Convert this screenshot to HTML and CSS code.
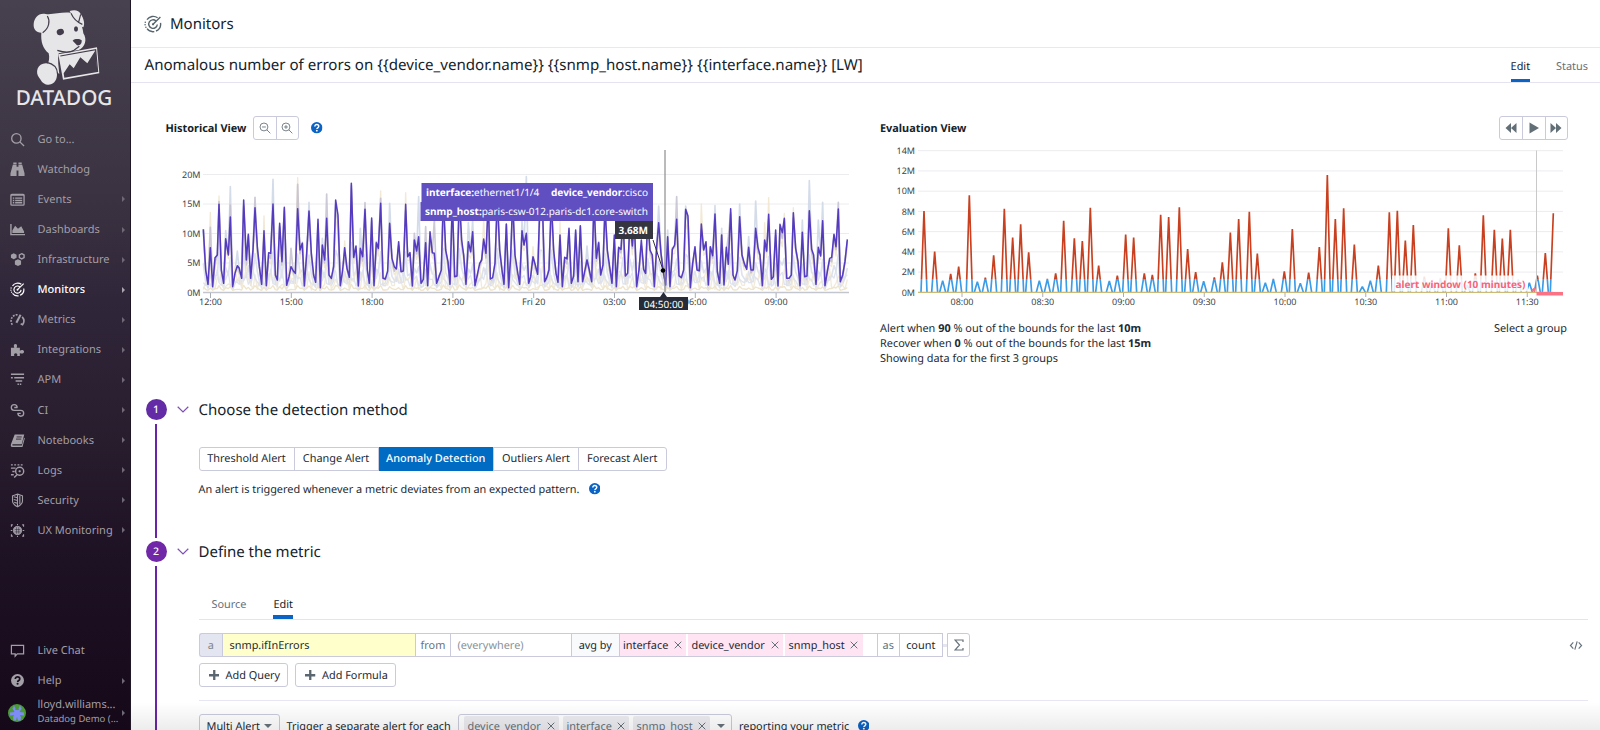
FILE: index.html
```html
<!DOCTYPE html>
<html lang="en">
<head>
<meta charset="utf-8">
<title>Monitors</title>
<link rel="stylesheet" href="styles.css">
</head>
<body>
<svg class="defs" aria-hidden="true">
  <symbol id="i-help" viewBox="0 0 16 16"><circle cx="8" cy="8" r="8" fill="currentColor"/><path d="M5.3 6.2c0-3.6 5.5-3.4 5.5-.2 0 2-2.6 2-2.6 3.7" fill="none" stroke="var(--mark,#fff)" stroke-width="2.1"/><circle cx="8.1" cy="12" r="1.3" fill="var(--mark,#fff)"/></symbol>
  <symbol id="i-monitor" viewBox="0 0 18 18"><g fill="none" stroke="currentColor" stroke-width="1.4"><path d="M3 4.600A7.600 7.600 0 0 1 13.600 2.800"/><path d="M16.500 7.800A7.600 7.600 0 0 1 12 16"/><path d="M10.300 16.600A7.600 7.600 0 0 1 3 13.700"/><path d="M12 6A4.300 4.300 0 1 0 13.300 9.500"/><path d="M8.800 9.400 16.400 2"/></g><circle cx="9" cy="9.300" r="1.100" fill="currentColor"/><circle cx="1.300" cy="7.200" r=".8" fill="currentColor"/><circle cx="1.100" cy="9.800" r=".8" fill="currentColor"/><circle cx="1.900" cy="12.200" r=".8" fill="currentColor"/></symbol>
  <symbol id="i-x" viewBox="0 0 8 8"><path d="M.7.7l6.600 6.600M7.300.7L.7 7.300" stroke="currentColor" stroke-width="1" fill="none"/></symbol>
  <symbol id="i-plus" viewBox="0 0 10 10"><path d="M5 0v10M0 5h10" stroke="currentColor" stroke-width="2.200"/></symbol>
  <symbol id="i-chev" viewBox="0 0 12 7"><path d="M.7.8 6 6l5.300-5.200" stroke="currentColor" stroke-width="1.200" fill="none"/></symbol>
</svg>

<div class="app">
  <aside class="sidebar">
    <svg class="logo" viewBox="0 0 393 330">
      <g fill="#e6e5e7">
        <path d="M137 42C160 45 190 34 213 39C232 50 248 72 250 100C262 118 256 142 236 150L176 160C172 180 176 200 178 222L140 200C148 185 149 172 146 160C128 145 122 125 124 98C108 98 100 88 101 72C103 52 116 38 137 42Z"/>
        <path d="M209 33C222 28 238 30 242 42C252 56 255 72 250 82C238 80 222 58 209 33Z"/>
        <path d="M138 190C158 190 172 205 171 225C170 245 158 255 143 254C128 253 124 242 118 234C104 218 112 190 138 190Z"/>
        <path d="M175 163 291 142 298 220 189 239Z"/>
      </g>
      <g fill="none" stroke="#433c4a" stroke-width="3.500">
        <path d="M142 48C151 62 148 84 128 98"/>
        <path d="M213 40C219 54 229 66 247 73M242 43 236 66"/>
        <path d="M172 151C190 157 208 160 222 151L238 139"/>
        <path d="M140 187C162 191 172 203 173 222L179 224"/>
        <path d="M181 168 287 149 293 216"/>
      </g>
      <g fill="#433c4a">
        <ellipse cx="181" cy="96" rx="11" ry="9" transform="rotate(-15 181 96)"/><ellipse cx="228" cy="87" rx="6" ry="8"/>
        <path d="M218 122C226 115 239 117 245 121C246 133 238 138 231 136Z"/>
        <path d="M193 233 191 220 209 193 221 205 241 172 262 190 287 150 292 216Z"/>
      </g>
      <text x="47" y="315" textLength="290" lengthAdjust="spacingAndGlyphs" class="wordmark">DATADOG</text>
    </svg>
    <nav class="nav">
      <a class="nav-item"><svg viewBox="0 0 16 16"><circle cx="6.800" cy="6.800" r="5" fill="none" stroke="currentColor" stroke-width="1.400"/><path d="M10.500 10.500 15 15" stroke="currentColor" stroke-width="1.400"/></svg><span>Go to...</span></a>
      <a class="nav-item"><svg viewBox="0 0 16 16" fill="currentColor"><path d="M3 3h4v12H.5V12zM3.500.5H7v2H3.500zM13 3H9v12h6.500V12zM9 .5h3.500v2H9zM7 5h2v4H7z"/></svg><span>Watchdog</span></a>
      <a class="nav-item more"><svg viewBox="0 0 16 16"><rect x="1" y="2.500" width="14" height="11.500" rx="1" fill="none" stroke="currentColor" stroke-width="1.400"/><path d="M1 3.200h14M3 6.500h1.500M5.500 6.500H13M3 9h1.500M5.500 9H13M3 11.500h1.500M5.500 11.500H13" stroke="currentColor" stroke-width="1.500"/></svg><span>Events</span></a>
      <a class="nav-item more"><svg viewBox="0 0 16 16"><path d="M1 2v11.500h15" fill="none" stroke="currentColor" stroke-width="1.500"/><path d="M2.500 11.800V9l3-5 3 3.200 3.500-2.700 3 5.500v1.800z" fill="currentColor"/></svg><span>Dashboards</span></a>
      <a class="nav-item more"><svg viewBox="0 0 16 16" fill="currentColor"><path d="M4 1.200 7 2.800v3.400L4 7.800 1 6.200V2.800zM8.500 7.600l3.300 1.800v3.800l-3.300 1.800-3.300-1.800V9.400z"/><path d="m12.500 1.800 2.500 1.400v2.700l-2.500 1.400L10 5.900V3.200z" fill="none" stroke="currentColor" stroke-width="1.500"/></svg><span>Infrastructure</span></a>
      <a class="nav-item more active"><svg><use href="#i-monitor"/></svg><span>Monitors</span></a>
      <a class="nav-item more"><svg viewBox="0 0 16 16" fill="none" stroke="currentColor" stroke-width="1.700"><path d="M2.500 13.500A6.600 6.600 0 0 1 9 3" stroke-dasharray="2 1.200"/><path d="M13 5.200a6.600 6.600 0 0 1 .4 8.300l-2-1"/><path d="M6.800 11.500 11.300 3" stroke-width="2.200"/></svg><span>Metrics</span></a>
      <a class="nav-item more"><svg viewBox="0 0 16 16" fill="currentColor"><path d="M1 6h3.600C3.500 3.800 4.200 2 5.800 2s2.300 1.800 1.200 4h3.500v3.200c1.800-1.300 4.500-.8 4.500 1.200s-2.700 2.500-4.500 1.200V15H7.600c.8-2-.2-3-1.500-3s-2.300 1-1.500 3H1z"/></svg><span>Integrations</span></a>
      <a class="nav-item more"><svg viewBox="0 0 16 16" stroke="currentColor" stroke-width="1.600"><path d="M1 2.500h14M1 6h2M4.500 6H15M6 9.500h7M8 13h1.500M10.500 13H12" /></svg><span>APM</span></a>
      <a class="nav-item more"><svg viewBox="0 0 16 16" fill="none" stroke="currentColor" stroke-width="1.400"><path d="M7.600 4.800A3.100 3.100 0 1 0 4.500 7.900H11.500A3.100 3.100 0 1 1 8.400 11"/><path d="M4.500 4.800h3.500M8 11h3.500"/></svg><span>CI</span></a>
      <a class="nav-item more"><svg viewBox="0 0 16 16" fill="currentColor"><path d="M5 1.500h10.200L12.500 12H3c-.8.200-.8 1.300 0 1.400h9.600L15 5l.8.600-2.500 9.400H2.500C.6 15 .6 13 1.200 11.500z"/><path d="M7 4.200h5.500M6.400 6.500H12" stroke="#261c2b" stroke-width=".9"/></svg><span>Notebooks</span></a>
      <a class="nav-item more"><svg viewBox="0 0 16 16" fill="none" stroke="currentColor" stroke-width="1.500"><path d="M1 2h2M4.500 2h2M8 2h2M11.500 2h2M1 5.500h5M2.500 9H5M1 12.500h3"/><circle cx="10.300" cy="8.800" r="4.300"/><path d="m7.500 12.500-3 3M9.200 8.800h2.200M10.300 7.700v2.200"/></svg><span>Logs</span></a>
      <a class="nav-item more"><svg viewBox="0 0 16 16" fill="none" stroke="currentColor" stroke-width="1.200"><path d="M8 1.200 13.300 3v5.500c0 3-2.900 5-5.300 6.300C5.600 13.500 2.700 11.500 2.700 8.500V3zM8 1v14"/><path d="M8 5 4 4M8 8 4 7M8 11 4.500 10M10.500 3v9" /></svg><span>Security</span></a>
      <a class="nav-item more"><svg viewBox="0 0 16 16" fill="none" stroke="currentColor"><circle cx="8" cy="8" r="4.300" fill="currentColor"/><path d="M5 7h6M5 9.500h6M7 4.500v7M9.300 4.500v7" stroke="#20152a" stroke-width=".5"/><path d="M1.500 4V2H3M13 2h1.500v2M1.500 12v2H3M13 14h1.500v-2M8 1v1.500M8 13.500V15M.8 8h1.700M13.500 8h1.700" stroke-width="1.100"/></svg><span>UX Monitoring</span></a>
    </nav>
    <div class="nav nav-bottom">
      <a class="nav-item"><svg viewBox="0 0 16 16" fill="none" stroke="currentColor" stroke-width="1.300"><path d="M1.500 2.500h13v9H7.800L5.500 14v-2.500h-4z"/></svg><span>Live Chat</span></a>
      <a class="nav-item more"><svg class="help-nav"><use href="#i-help"/></svg><span>Help</span></a>
      <a class="user more"><svg viewBox="0 0 18 18"><circle cx="9" cy="9" r="9" fill="#4c9a36"/><path d="M6 1.500 7.300 4v2h3.400V4L12 1.500l1.500 3-2 3.500 4.500.5v3l-4-.5 1 2.500-.5 3H10l-1-3.500L8 16.500H5.500l-.5-3L6 11l-4 .5v-3L6.500 8l-2-3.500z" fill="#7e8cf5"/></svg><span class="user-name">lloyd.williams...<small>Datadog Demo (...</small></span></a>
    </div>
  </aside>

  <main class="main">
    <header class="topbar"><svg><use href="#i-monitor"/></svg><span>Monitors</span></header>
    <div class="titlebar">
      <h1>Anomalous number of errors on {{device_vendor.name}} {{snmp_host.name}} {{interface.name}} [LW]</h1>
      <div class="page-tabs"><span class="on">Edit</span><span>Status</span></div>
    </div>

    <div class="views">
      <section class="view hist">
        <div class="view-head"><h2>Historical View</h2>
          <div class="btns"><span><svg viewBox="0 0 14 14" fill="none" stroke="currentColor"><circle cx="5.800" cy="5.800" r="4.600"/><path d="m9.200 9.200 4 4M3.600 5.800H8"/></svg></span><span><svg viewBox="0 0 14 14" fill="none" stroke="currentColor"><circle cx="5.800" cy="5.800" r="4.600"/><path d="m9.200 9.200 4 4M3.600 5.800H8M5.800 3.600V8"/></svg></span></div>
          <svg class="help"><use href="#i-help"/></svg>
        </div>
        <svg id="hist" class="chart" width="715" height="175" viewBox="150 140 715 175"></svg>
      </section>
      <section class="view eval">
        <div class="view-head"><h2>Evaluation View</h2>
          <div class="btns right"><span><svg viewBox="0 0 12 12" fill="currentColor"><path d="M6 1v10L.5 6zM11.500 1v10L6 6z"/></svg></span><span><svg viewBox="0 0 12 12" fill="currentColor"><path d="M1.500.5 11 6l-9.500 5.500z"/></svg></span><span><svg viewBox="0 0 12 12" fill="currentColor"><path d="M.5 1v10L6 6zM6 1v10l5.500-5z"/></svg></span></div>
        </div>
        <svg id="eval" class="chart" width="690" height="175" viewBox="880 140 690 175"></svg>
        <div class="eval-foot">
          <p>Alert when <b>90</b> % out of the bounds for the last <b>10m</b><br>Recover when <b>0</b> % out of the bounds for the last <b>15m</b><br>Showing data for the first 3 groups</p>
          <span>Select a group</span>
        </div>
      </section>
    </div>

    <section class="step one">
      <div class="rail"><span class="num">1</span><i></i></div>
      <svg class="chev"><use href="#i-chev"/></svg>
      <div class="step-body">
        <h3>Choose the detection method</h3>
        <div class="methods"><span>Threshold Alert</span><span>Change Alert</span><span class="on">Anomaly Detection</span><span>Outliers Alert</span><span>Forecast Alert</span></div>
        <div class="desc">An alert is triggered whenever a metric deviates from an expected pattern.<svg class="help"><use href="#i-help"/></svg></div>
      </div>
    </section>

    <section class="step two">
      <div class="rail"><span class="num">2</span><i></i></div>
      <svg class="chev"><use href="#i-chev"/></svg>
      <div class="step-body">
        <h3>Define the metric</h3>
        <div class="tabs"><span>Source</span><span class="on">Edit</span></div>
        <div class="query">
          <span class="q-a">a</span><span class="q-metric">snmp.ifInErrors</span><span class="q-from">from</span><span class="q-scope">(everywhere)</span><span class="q-avg">avg by</span>
          <span class="q-tags"><em>interface<svg><use href="#i-x"/></svg></em><em>device_vendor<svg><use href="#i-x"/></svg></em><em>snmp_host<svg><use href="#i-x"/></svg></em></span>
          <span class="q-as">as</span><span class="q-count">count</span><i class="q-link"></i>
          <span class="q-sum"><svg viewBox="0 0 10 12" fill="none" stroke="currentColor" stroke-width="1.200"><path d="M9 3V1H1l4.500 5L1 11h8V9"/></svg></span>
          <svg class="code" viewBox="0 0 14 10" fill="none" stroke="currentColor" stroke-width="1.300"><path d="M4 1.500.8 5 4 8.500M10 1.500 13.200 5 10 8.500M8.300.5 5.700 9.500"/></svg>
        </div>
        <div class="adds"><span><svg><use href="#i-plus"/></svg>Add Query</span><span><svg><use href="#i-plus"/></svg>Add Formula</span></div>
        <div class="alerts">
          <span class="select">Multi Alert<i class="caret"></i></span><span class="trigger">Trigger a separate alert for each</span>
          <span class="multi"><em>device_vendor<svg><use href="#i-x"/></svg></em><em>interface<svg><use href="#i-x"/></svg></em><em>snmp_host<svg><use href="#i-x"/></svg></em><i class="caret"></i></span>
          <span class="report">reporting your metric</span><svg class="help"><use href="#i-help"/></svg>
        </div>
      </div>
    </section>
    <div class="fade"></div>
  </main>
</div>
<script src="charts.js"></script>
</body>
</html>
```

FILE: styles.css
```css
* { box-sizing: border-box; }
body { margin: 0; font-family: "Noto Sans", sans-serif; font-size: 10.9px; color: #1c2b34; background: #fff; overflow: hidden; text-rendering: geometricPrecision; }
h1, h2, h3, p { margin: 0; font-weight: 400; }
svg { display: block; flex: none; }
em, i { font-style: normal; }
.defs { position: absolute; width: 0; height: 0; }
.app { display: flex; width: 1600px; height: 730px; overflow: hidden; }

.sidebar { width: 131px; flex: none; height: 730px; display: flex; flex-direction: column; background: linear-gradient(#47404e 0, #3b3341 190px, #30263a 300px, #281d2d 440px, #1d1124 560px, #150919 730px); border-right: 1px solid #1f1725; color: #a39fa7; }
.logo { width: 131px; height: 110px; }
.wordmark { font: 500 62px "Noto Sans", sans-serif; fill: #e6e5e7; }
.nav { padding-top: 14.2px; }
.nav-item { display: flex; align-items: center; height: 30.1px; padding-left: 10px; font-size: 11px; }
.nav-item svg { width: 15px; height: 15px; margin-right: 12.5px; }
.nav-item span { white-space: nowrap; }
.nav-item.active { color: #fff; font-weight: 500; }
.nav-item .help-nav { width: 13px; height: 13px; margin: 0 13.5px 0 1px; --mark: #180c1d; }
.more::after { content: ""; margin-left: auto; margin-right: 5px; border-left: 3px solid #6f6976; border-top: 3px solid transparent; border-bottom: 3px solid transparent; }
.more.active::after { border-left-color: #aaa5ae; }
.nav-bottom { margin-top: auto; padding: 0; height: 94.500px; }
.user { display: flex; align-items: center; height: 34px; padding-left: 8px; }
.user svg { width: 18px; height: 18px; margin-right: 11.5px; }
.user-name { font-size: 11px; line-height: 14px; white-space: nowrap; margin-top: -1px; }
.user-name small { display: block; font-size: 9.500px; }

.main { flex: 1; position: relative; min-width: 0; }
.topbar { height: 48px; border-bottom: 1px solid #e9e8f0; display: flex; align-items: center; padding-left: 13px; font-size: 15px; color: #14232b; }
.topbar svg { width: 18px; height: 18px; margin-right: 8px; color: #56646c; }
.titlebar { height: 35px; border-bottom: 1px solid #e4e4f0; display: flex; align-items: center; padding: 0 12px 0 13.500px; }
h1 { font-size: 15.1px; color: #14232b; white-space: nowrap; }
.page-tabs { margin-left: auto; display: flex; gap: 26px; height: 33.500px; align-self: flex-start; color: #66727b; line-height: 38px; }
.page-tabs .on { color: #14232b; border-bottom: 3px solid #0b63c5; }

.views { display: flex; height: 310px; padding-top: 33px; }
.view.hist { width: 730px; padding-left: 19px; }
.view.eval { width: 706px; padding-left: 19px; }
.hist .view-head { padding-left: 15.500px; }
.eval .view-head { width: 687px; }
.view-head { display: flex; align-items: center; height: 24px; }
h2 { font-size: 10.9px; font-weight: 700; color: #14232b; white-space: nowrap; }
.hist h2 { width: 87px; }
.btns { display: flex; border: 1px solid #c9cbdc; border-radius: 3px; height: 24px; color: #626f77; }
.btns span { width: 22.300px; display: grid; place-items: center; }
.btns span + span { border-left: 1px solid #c9cbdc; }
.btns svg { width: 12px; height: 12px; }
.btns.right { margin-left: auto; margin-right: -1px; }
.help { width: 11.500px; height: 11.500px; color: #0b63c5; }
.hist .help { margin-left: 12px; }
.tick { font: 9px "Noto Sans", sans-serif; fill: #3b454c; }
.eval-foot { display: flex; justify-content: space-between; width: 687px; line-height: 15px; margin-top: 6px; }
.tip { font: 10px "Noto Sans", sans-serif; fill: #fff; }
.tip-b { font-weight: 700; }
.win { font: 700 10px "Noto Sans", sans-serif; fill: #fb6478; }

.step { display: flex; padding-left: 14.500px; color: #1c2b34; }
.step.one { height: 142px; margin-top: 6px; }
.step.two { height: 200px; }
.rail { width: 21px; display: flex; flex-direction: column; align-items: center; }
.num { width: 21px; height: 21px; border-radius: 50%; background: #632ca6; color: #fff; font-size: 10.500px; font-weight: 500; display: grid; place-items: center; }
.rail i { width: 2px; flex: 1; margin: 4px 0 3px; background: #6a24a8; }
.two .num { background: #7027a8; }
.two .rail i { margin-bottom: 0; }
.chev { width: 12px; height: 7px; color: #7f4fb5; margin: 7px 10px 0 10px; }
.step-body { flex: 1; margin-right: 12px; }
h3 { font-size: 15px; line-height: 22px; height: 21px; color: #14232b; }
.methods { display: grid; grid-template-columns: 94px 84px 115.500px 85px 87.500px; width: 468px; height: 24px; margin-top: 26.500px; border: 1px solid #c9cbdc; border-radius: 3px; }
.methods span { display: grid; place-items: center; white-space: nowrap; }
.methods span + span { border-left: 1px solid #c9cbdc; }
.methods .on { background: #006bc2; color: #fff; font-weight: 500; margin: -1px 0; }
.desc { display: flex; align-items: center; height: 16px; margin-top: 10.500px; }
.desc .help { margin-left: 9.500px; }
.tabs { display: flex; height: 32px; margin-top: 26px; padding-left: 13px; border-bottom: 1px solid #e4e4f0; align-items: stretch; line-height: 33px; color: #66727b; }
.tabs span + span { margin-left: 26.500px; padding: 0 .5px; }
.tabs .on { color: #14232b; border-bottom: 4px solid #0b63c5; }
.query { display: flex; align-items: center; margin-top: 13px; height: 24px; }
.query > span { height: 24px; border: 1px solid #c9cbdc; border-right: 0; display: flex; align-items: center; justify-content: center; white-space: nowrap; }
.query .q-a { width: 23.500px; background: #e3e5f0; border-radius: 3px 0 0 3px; color: #7d8790; }
.query .q-metric { width: 193px; background: #feffcb; justify-content: flex-start; padding-left: 6.500px; }
.query .q-from { width: 35px; color: #66727b; }
.query .q-scope { width: 121px; color: #8a9399; justify-content: flex-start; padding-left: 6.500px; }
.query .q-avg { width: 47.500px; background: #f9fafb; }
.query .q-tags { width: 258px; justify-content: flex-start; gap: 2px; padding: 0; }
.q-tags em { background: #ffe4f3; height: 22px; display: flex; align-items: center; justify-content: space-between; padding: 0 4.500px 0 3.500px; width: 66.500px; }
.q-tags em:nth-child(2) { width: 95px; }
.q-tags em:nth-child(3) { width: 77.500px; }
.q-tags svg, .multi em svg { width: 8px; height: 8px; color: #66727b; }
.query .q-as { width: 22.500px; color: #66727b; }
.query .q-count { width: 43.500px; border-right: 1px solid #c9cbdc; }
.q-link { width: 4.500px; height: 3px; background: #e4e5ee; }
.query .q-sum { width: 23px; border-right: 1px solid #c9cbdc; border-radius: 0 3px 3px 0; color: #66727b; }
.q-sum svg { width: 10px; height: 12px; }
.code { width: 14px; height: 9px; color: #66727b; margin-left: auto; margin-right: 5.500px; }
.adds { display: flex; gap: 7px; margin-top: 6px; height: 37.500px; border-bottom: 1px solid #e6e7f2; }
.adds span { height: 24px; width: 89.500px; border: 1px solid #c9cbdc; border-radius: 3px; display: flex; align-items: center; padding-left: 9px; gap: 6.500px; white-space: nowrap; }
.adds span + span { width: 101px; }
.adds svg { width: 10.500px; height: 10.500px; color: #5a6770; }
.alerts { display: flex; align-items: center; margin-top: 13.500px; height: 24px; white-space: nowrap; }
.select { width: 81.500px; height: 24px; border: 1px solid #c9cbdc; border-radius: 3px; display: flex; align-items: center; padding: 0 7px; justify-content: space-between; }
.caret { border-top: 4.500px solid #66727b; border-left: 4px solid transparent; border-right: 4px solid transparent; }
.trigger { width: 171px; margin-left: 6.500px; }
.multi { width: 274px; height: 24px; border: 1px solid #c9cbdc; border-radius: 3px; display: flex; align-items: center; gap: 4px; padding: 0 5px; color: #66727b; }
.multi em { background: #ececf1; border-radius: 2px; height: 20px; width: 95px; display: flex; align-items: center; justify-content: space-between; padding: 0 4px; }
.multi em:nth-child(2) { width: 66px; }
.multi em:nth-child(3) { width: 77px; }
.multi .caret { margin-left: 3px; }
.report { margin-left: 7.500px; width: 118.500px; }
.fade { position: absolute; left: 0; right: 0; top: 702px; height: 28px; background: linear-gradient(rgba(0,0,0,0), rgba(0,0,0,.075)); }
```

FILE: charts.js
```js
// Plot coordinates are stored at 3x and scaled down inside a group.
const main = `160,268 167,390 174,433 181,323 188,440 195,353 202,345 207,193 214,390 221,430 227,296 235,345 241,231 248,440 255,400 262,377 268,385 275,415 281,180 289,360 295,283 302,415 309,330 315,203 322,320 328,380 335,433 342,272 349,437 356,338 362,340 369,192 376,405 382,420 389,250 396,365 403,202 410,436 417,410 423,380 430,393 436,400 443,206 450,330 457,310 463,438 470,340 477,213 484,340 491,405 497,427 504,238 511,443 517,315 524,360 530,235 537,405 544,415 551,380 557,180 564,225 571,437 578,390 584,323 591,385 598,412 604,130 611,352 618,318 625,438 631,325 638,350 645,208 652,390 658,430 665,234 672,437 679,308 685,325 692,190 699,415 706,417 713,393 719,250 726,355 733,380 739,387 746,305 753,395 760,393 767,193 773,350 780,338 787,438 793,300 800,333 806,290 813,430 820,418 827,308 833,437 840,275 847,338 853,340 860,430 867,410 874,390 880,170 887,330 894,365 900,433 907,180 914,410 921,408 928,170 935,300 941,345 948,433 955,305 962,335 968,275 975,437 982,405 989,370 995,360 1001,297 1008,340 1015,180 1021,417 1028,413 1035,370 1042,170 1049,330 1056,390 1062,433 1069,252 1076,443 1082,350 1088,180 1095,345 1102,390 1109,433 1116,272 1122,315 1129,280 1136,430 1142,410 1149,350 1156,375 1163,403 1170,180 1177,180 1184,425 1190,413 1197,390 1204,180 1211,330 1218,400 1224,427 1230,285 1237,440 1244,352 1251,357 1257,265 1264,430 1271,408 1277,270 1284,425 1291,257 1298,425 1305,390 1311,360 1318,390 1325,425 1332,180 1339,355 1346,308 1352,405 1359,375 1365,200 1372,330 1379,380 1386,430 1393,285 1399,440 1406,322 1413,328 1419,230 1426,408 1433,400 1440,240 1447,318 1453,240 1460,440 1467,390 1474,300 1481,388 1487,400 1493,235 1500,330 1507,345 1513,440 1520,320 1526,248 1533,340 1540,395 1547,435 1553,290 1560,440 1567,328 1574,315 1580,238 1587,408 1594,413 1601,390 1607,208 1614,228 1621,443 1628,370 1635,320 1641,390 1648,392 1654,252 1661,330 1668,305 1675,435 1681,320 1688,347 1695,222 1702,395 1709,430 1715,285 1722,435 1729,322 1735,373 1742,206 1749,405 1755,420 1762,392 1769,230 1776,345 1783,370 1790,388 1796,322 1803,390 1810,390 1817,265 1824,322 1830,345 1837,437 1844,300 1850,333 1856,223 1864,418 1870,410 1877,270 1884,438 1890,253 1897,278 1903,235 1910,415 1917,415 1924,405 1930,218 1937,325 1944,365 1950,437 1957,277 1964,410 1971,408 1978,212 1985,328 1991,345 1998,433 2005,322 2012,348 2018,242 2025,437 2032,395 2039,355 2045,352 2052,283 2058,320 2065,207 2071,425 2078,405 2085,365 2092,298`;
const pts = main.split(' ').map(p => p.split(',').map(Number));
const overrides = {
  y: {181:217, 207:168, 342:228, 443:113, 584:303, 692:153, 767:158, 1001:240, 1149:320, 1230:245, 1654:192, 1844:248, 1856:173, 1903:220, 1930:203},
  g: {181:262, 207:185, 241:195, 315:172, 423:325, 443:133, 530:162, 645:188, 692:175, 793:280, 827:260, 853:240, 1580:170, 2065:187, 1735:290},
  b: {227:272, 241:140, 262:333, 369:118, 477:187, 517:295, 631:265, 719:190, 806:170, 955:248, 968:240, 1116:245, 1129:110, 1311:318, 1526:198, 1553:270, 1607:198, 1695:197, 1769:192, 1796:290, 1817:183, 1957:240, 1978:122, 2005:240, 2018:187, 1715:265}
};
function line(list, color, width, opacity) {
  return `<polyline points="${list.map(p => p.join(',')).join(' ')}" fill="none" stroke="${color}" stroke-width="${width}" stroke-opacity="${opacity}" stroke-linejoin="round"/>`;
}
function series(key, k, jitter) {
  return pts.map(([x, y], i) => [x, overrides[key][x] || Math.min(450, 450 - (450 - y) * k + ((i * 37) % 11 - 5) * jitter)]);
}
function low(k, base, s) {
  return pts.map(([x], i) => [x, Math.round(base - (450 - pts[(i + s) % pts.length][1]) * k)]);
}
function text(x, y, s, anchor, cls) {
  return `<text x="${x}" y="${y}" text-anchor="${anchor}" class="${cls || 'tick'}">${s}</text>`;
}

let h = '';
['20M', '15M', '10M', '5M', '0M'].forEach((s, i) => {
  const y = 174.500 + i * 29.500;
  h += `<path d="M203 ${y}H849" stroke="#ececef"/>` + text(200.500, y + 3, s, 'end');
});
h += '<path d="M203 292.500H849" stroke="#c3c6cf" stroke-width="1.500"/>';
h += '<g transform="translate(150 140) scale(.33333)">'
  + line(series('b', .93, 1.5), '#cdd6e6', 5, .85)
  + line(series('y', .8, 2), '#efe4cb', 4, .8)
  + line(series('g', .95, 2), '#c0bccd', 5, .8)
  + line(low(.45, 452, 0), '#dadfeb', 5, .9)
  + line(low(.27, 452, 4), '#f1e9d6', 4, .9)
  + line(low(.2, 440, 1), '#dde1ec', 4, .9)
  + line(low(.06, 452, 0), '#efe5cc', 4, 1)
  + line(pts, '#4a2fbd', 4.600, .92)
  + '</g>';
['12:00', '15:00', '18:00', '21:00', 'Fri 20', '03:00', '06:00', '09:00'].forEach((s, i) => {
  const x = 210.500 + i * 80.800;
  h += `<path d="M${x} 293v5" stroke="#a9adb5"/>` + text(x, 305, s, 'middle');
});
h += '<path d="M665 150V292" stroke="#8c8c8c" stroke-opacity=".75" stroke-width="1.600"/>'
  + '<path d="M421.500 183H653v38H420.500v-19h1z" fill="#5f4fc0"/>'
  + text(426, 196.200, '<tspan class="tip-b">interface:</tspan>ethernet1/1/4', 'start', 'tip')
  + text(648, 196.200, '<tspan class="tip-b">device_vendor</tspan>:cisco', 'end', 'tip')
  + text(648, 215, '<tspan class="tip-b">snmp_host:</tspan>paris-csw-012.paris-dc1.core-switch', 'end', 'tip')
  + '<path d="M615 221h38v18h-38z" fill="#34353f"/>' + text(648, 234.300, '3.68M', 'end', 'tip tip-b')
  + '<path d="M653 240 663 270" stroke="#333" fill="none"/><circle cx="663" cy="270.500" r="2.300" fill="#000"/>'
  + '<path d="M639 297h21l3.500-5 3.500 5h21v13h-49z" fill="#272b38"/>' + text(663.500, 307.500, '04:50:00', 'middle', 'tip');
document.getElementById('hist').innerHTML = h;

const peaks = `162,303 194,425 218,512 242,492 266,470 298,256 322,515 346,503 371,436 403,296 428,383 452,343 476,427 508,512 532,507 557,490 581,332 613,385 637,393 661,293 686,467 718,513 742,497 767,374 791,383 823,490 847,495 872,314 896,321 928,292 953,417 977,486 1001,514 1033,502 1057,457 1081,368 1106,327 1138,305 1162,431 1186,518 1210,507 1243,484 1267,357 1291,520 1316,488 1348,411 1372,195 1396,327 1421,295 1453,404 1477,530 1501,512 1525,467 1558,307 1582,302 1606,392 1630,345 1663,500 1687,520 1711,505 1735,355 1768,406 1792,525 1816,490 1840,316 1873,359 1897,386 1921,359 1945,508 1978,518 2002,497 2026,429`
  .split(' ').map(p => p.split(',').map(Number));
let d = peaks.map(([x, y]) => `M${x - 9} 547L${x} ${y}L${x + 9} 547`).join('') + 'M2041 547L2050 310';
let e = '<clipPath id="hi"><path d="M0 0H2300V507H0z"/></clipPath><clipPath id="lo"><path d="M0 507H2300V549H0z"/></clipPath>';
for (let i = 0; i <= 7; i++) {
  const y = 150.700 + i * 20.230;
  e += `<path d="M918 ${y}H1563" stroke="#ececef"/>` + text(915, y + 3.200, (14 - 2 * i) + 'M', 'end');
}
e += `<g transform="translate(870 110) scale(.33333)" fill="none" stroke-width="5" stroke-linejoin="bevel"><path d="${d}" stroke="#c8401f" clip-path="url(#hi)"/><path d="${d}" stroke="#3b9ce8" clip-path="url(#lo)"/></g>`
  + '<path d="M918 292.300H1553" stroke="#cdb978" stroke-width="1.300"/>'
  + '<path d="M1536.500 150.500V292" stroke="#c9c9c9"/>';
['08:00', '08:30', '09:00', '09:30', '10:00', '10:30', '11:00', '11:30'].forEach((s, i) => {
  const x = 962 + i * 80.750;
  e += `<path d="M${x} 293v4" stroke="#a9adb5"/>` + text(x, 305, s, 'middle');
});
e += '<path d="M1392 275.500h136v16h-136z" fill="#fff" fill-opacity=".86"/>'
  + text(1460.500, 288, 'alert window (10 minutes)', 'middle', 'win')
  + '<path d="M1536.500 292h26.500v3.500h-26.500zM1531 290l4-3v5z" fill="#fb7285"/>';
document.getElementById('eval').innerHTML = e;
```
